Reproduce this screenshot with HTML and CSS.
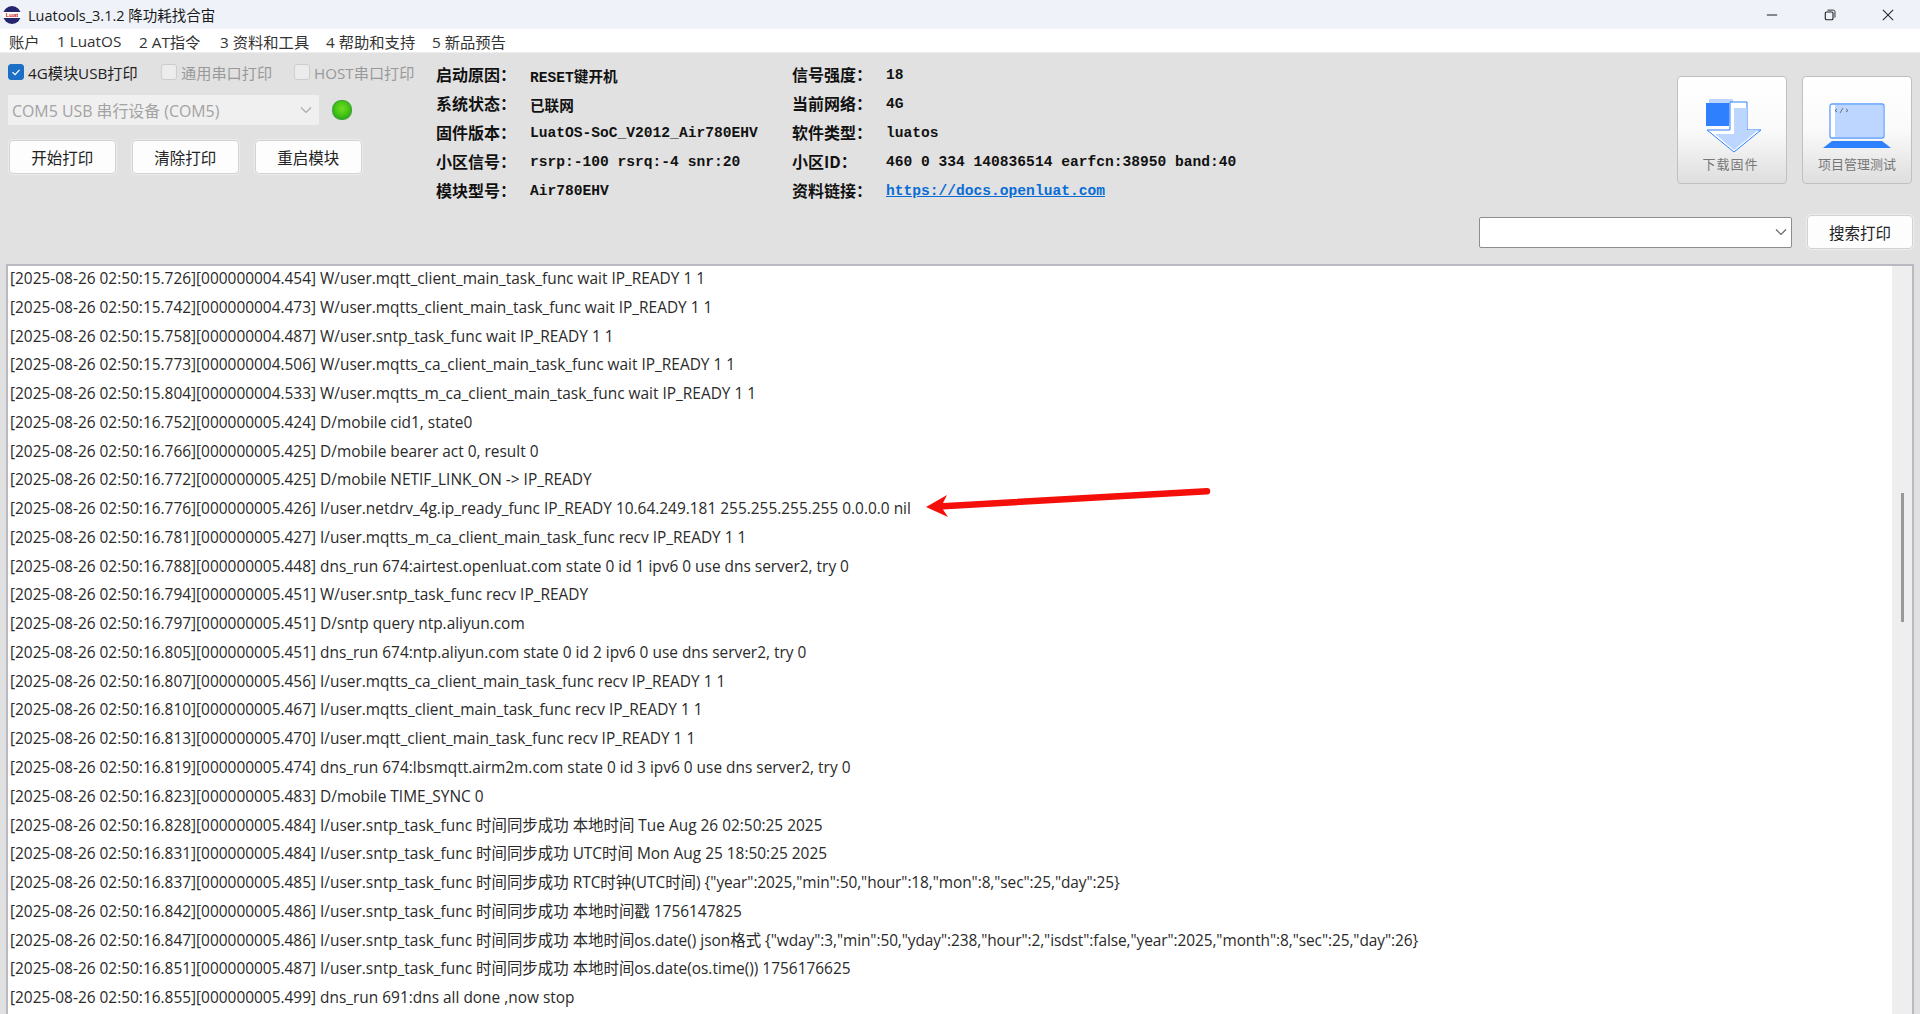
FILE: index.html
```html
<!DOCTYPE html>
<html lang="zh-CN">
<head>
<meta charset="utf-8">
<title>Luatools</title>
<link rel="stylesheet" href="styles.css">
</head>
<body>
<div class="app">
  <header class="titlebar">
    <span class="logo"><span class="logo-text">Luat</span></span>
    <span class="title">Luatools_3.1.2 降功耗找合宙</span>
    <span class="winctl">
      <svg class="wicon" viewBox="0 0 14 14"><path d="M1 7H13" stroke="#222" stroke-width="1.2" fill="none"/></svg>
      <svg class="wicon" viewBox="0 0 14 14"><rect x="1.5" y="3.5" width="9" height="9" rx="1.5" stroke="#222" stroke-width="1.3" fill="none"/><path d="M4 1.3H11A2 2 0 0 1 12.8 3V10" stroke="#222" stroke-width="1.1" fill="none"/></svg>
      <svg class="wicon" viewBox="0 0 14 14"><path d="M1 1L13 13M13 1L1 13" stroke="#222" stroke-width="1.2" fill="none"/></svg>
    </span>
  </header>
  <nav class="menubar">
    <span class="m1">账户</span><span class="m2">1 LuatOS</span><span class="m3">2 AT指令</span><span class="m4">3 资料和工具</span><span class="m5">4 帮助和支持</span><span>5 新品预告</span>
  </nav>
  <section class="panel">
    <div class="left">
      <div class="checks">
        <label class="check on"><span class="box"><svg viewBox="0 0 16 16"><path d="M4 8.3L7 11L12 5.5" stroke="#fff" stroke-width="1.4" fill="none"/></svg></span>4G模块USB打印</label>
        <label class="check off c2"><span class="box"></span>通用串口打印</label>
        <label class="check off"><span class="box"></span>HOST串口打印</label>
      </div>
      <div class="portrow">
        <div class="combo disabled"><span>COM5 USB 串行设备 (COM5)</span><svg class="chev" viewBox="0 0 12 8"><path d="M1 1.5L6 6.5L11 1.5" stroke="#aaa" stroke-width="1.2" fill="none"/></svg></div>
        <span class="led"></span>
      </div>
      <div class="btns">
        <button class="btn">开始打印</button>
        <button class="btn">清除打印</button>
        <button class="btn">重启模块</button>
      </div>
    </div>
    <div class="info">
      <span class="k">启动原因：</span><span class="v">RESET键开机</span><span class="k">信号强度：</span><span class="v">18</span>
      <span class="k">系统状态：</span><span class="v">已联网</span><span class="k">当前网络：</span><span class="v">4G</span>
      <span class="k">固件版本：</span><span class="v">LuatOS-SoC_V2012_Air780EHV</span><span class="k">软件类型：</span><span class="v">luatos</span>
      <span class="k">小区信号：</span><span class="v">rsrp:-100 rsrq:-4 snr:20</span><span class="k">小区ID：</span><span class="v">460 0 334 140836514 earfcn:38950 band:40</span>
      <span class="k">模块型号：</span><span class="v">Air780EHV</span><span class="k">资料链接：</span><a class="v link" href="#">https://docs.openluat.com</a>
    </div>
    <div class="right">
      <div class="bigs">
        <button class="big">
          <svg class="bigicon" viewBox="0 0 56 54"><rect x="3" y="0" width="24" height="24" fill="#bcd6ff"/><path d="M24 3H41V31H55L28 53L1 31H24Z" fill="#fff" stroke="#2f80ff" stroke-width="1"/><path d="M28 9H41V31H52L28 51L9 35H28Z" fill="#bcd6ff"/><rect x="0" y="4" width="23" height="23" fill="#2f80ff"/></svg>
          <span class="spaced">下载固件</span>
        </button>
        <button class="big">
          <svg class="bigicon wide" viewBox="0 0 70 46"><rect x="8" y="1" width="54" height="34" rx="2" fill="#fff" stroke="#5c9dff" stroke-width="1.3"/><rect x="13" y="2" width="48" height="32" fill="#bcd6ff"/><path d="M10 38H60L69 45H1Z" fill="#2f80ff"/><path d="M15 6L13 7.5L15 9M24 6L26 7.5L24 9M18 10L21 5" stroke="#555" stroke-width=".8" fill="none"/></svg>
          <span>项目管理测试</span>
        </button>
      </div>
      <div class="searchrow">
        <div class="combo search"><svg class="chev" viewBox="0 0 12 8"><path d="M1 1.5L6 6.5L11 1.5" stroke="#666" stroke-width="1.2" fill="none"/></svg></div>
        <button class="btn sbtn">搜索打印</button>
      </div>
    </div>
  </section>
  <section class="logbox">
    <div class="log">
      <div>[2025-08-26 02:50:15.726][000000004.454] W/user.mqtt_client_main_task_func wait IP_READY 1 1</div>
      <div>[2025-08-26 02:50:15.742][000000004.473] W/user.mqtts_client_main_task_func wait IP_READY 1 1</div>
      <div>[2025-08-26 02:50:15.758][000000004.487] W/user.sntp_task_func wait IP_READY 1 1</div>
      <div>[2025-08-26 02:50:15.773][000000004.506] W/user.mqtts_ca_client_main_task_func wait IP_READY 1 1</div>
      <div>[2025-08-26 02:50:15.804][000000004.533] W/user.mqtts_m_ca_client_main_task_func wait IP_READY 1 1</div>
      <div>[2025-08-26 02:50:16.752][000000005.424] D/mobile cid1, state0</div>
      <div>[2025-08-26 02:50:16.766][000000005.425] D/mobile bearer act 0, result 0</div>
      <div>[2025-08-26 02:50:16.772][000000005.425] D/mobile NETIF_LINK_ON -&gt; IP_READY</div>
      <div>[2025-08-26 02:50:16.776][000000005.426] I/user.netdrv_4g.ip_ready_func IP_READY 10.64.249.181 255.255.255.255 0.0.0.0 nil</div>
      <div>[2025-08-26 02:50:16.781][000000005.427] I/user.mqtts_m_ca_client_main_task_func recv IP_READY 1 1</div>
      <div>[2025-08-26 02:50:16.788][000000005.448] dns_run 674:airtest.openluat.com state 0 id 1 ipv6 0 use dns server2, try 0</div>
      <div>[2025-08-26 02:50:16.794][000000005.451] W/user.sntp_task_func recv IP_READY</div>
      <div>[2025-08-26 02:50:16.797][000000005.451] D/sntp query ntp.aliyun.com</div>
      <div>[2025-08-26 02:50:16.805][000000005.451] dns_run 674:ntp.aliyun.com state 0 id 2 ipv6 0 use dns server2, try 0</div>
      <div>[2025-08-26 02:50:16.807][000000005.456] I/user.mqtts_ca_client_main_task_func recv IP_READY 1 1</div>
      <div>[2025-08-26 02:50:16.810][000000005.467] I/user.mqtts_client_main_task_func recv IP_READY 1 1</div>
      <div>[2025-08-26 02:50:16.813][000000005.470] I/user.mqtt_client_main_task_func recv IP_READY 1 1</div>
      <div>[2025-08-26 02:50:16.819][000000005.474] dns_run 674:lbsmqtt.airm2m.com state 0 id 3 ipv6 0 use dns server2, try 0</div>
      <div>[2025-08-26 02:50:16.823][000000005.483] D/mobile TIME_SYNC 0</div>
      <div>[2025-08-26 02:50:16.828][000000005.484] I/user.sntp_task_func 时间同步成功 本地时间 Tue Aug 26 02:50:25 2025</div>
      <div>[2025-08-26 02:50:16.831][000000005.484] I/user.sntp_task_func 时间同步成功 UTC时间 Mon Aug 25 18:50:25 2025</div>
      <div>[2025-08-26 02:50:16.837][000000005.485] I/user.sntp_task_func 时间同步成功 RTC时钟(UTC时间) <span class="json">{"year":2025,"min":50,"hour":18,"mon":8,"sec":25,"day":25}</span></div>
      <div>[2025-08-26 02:50:16.842][000000005.486] I/user.sntp_task_func 时间同步成功 本地时间戳 1756147825</div>
      <div>[2025-08-26 02:50:16.847][000000005.486] I/user.sntp_task_func 时间同步成功 本地时间os.date() json格式 <span class="json">{"wday":3,"min":50,"yday":238,"hour":2,"isdst":false,"year":2025,"month":8,"sec":25,"day":26}</span></div>
      <div>[2025-08-26 02:50:16.851][000000005.487] I/user.sntp_task_func 时间同步成功 本地时间os.date(os.time()) 1756176625</div>
      <div>[2025-08-26 02:50:16.855][000000005.499] dns_run 691:dns all done ,now stop</div>
    </div>
    <div class="scrollbar"><span class="thumb"></span></div>
  </section>
  <svg class="arrow" viewBox="0 0 300 40"><path d="M3 21L24 9L20 17L284 2A3.2 3.2 0 0 1 284 8.5L20 23.5L25 31Z" fill="#f40f0a"/></svg>
</div>
</body>
</html>
```
FILE: styles.css
```css
* { box-sizing: border-box; }
html, body { margin: 0; height: 100%; overflow: hidden; }
body { font-family: "Open Sans", "Noto Sans CJK SC", sans-serif; color: #222; background: #e1e1e1; }
.app { position: relative; height: 1014px; display: flex; flex-direction: column; }

.titlebar { height: 29px; background: #eff3f9; display: flex; align-items: center; padding-left: 3px; flex: none; }
.logo { width: 18px; height: 18px; border-radius: 50%; background: #25256e; display: flex; align-items: center; justify-content: center; }
.logo-text { background: #fff; color: #c22; font: bold 6px/6px "Liberation Sans", sans-serif; width: 100%; text-align: center; }
.title { margin-left: 7px; font-size: 14.5px; color: #1a1a1a; }
.winctl { margin-left: auto; display: flex; gap: 46px; padding-right: 26px; }
.wicon { width: 12px; height: 12px; display: block; }

.menubar { height: 23px; background: #fff; display: flex; align-items: center; padding-left: 9px; font-size: 15.3px; flex: none; white-space: pre; color: #333; }
.menubar span { display: block; }
.m1 { width: 48px; }
.m2 { width: 82px; }
.m3 { width: 81px; }
.m4 { width: 106px; }
.m5 { width: 106px; }

.panel { height: 212px; flex: none; display: flex; border-top: 1px solid #eee; }
.left { width: 436px; flex: none; padding: 8px 0 0 8px; }
.checks { display: flex; align-items: center; height: 22px; font-size: 15.2px; }
.check { display: flex; align-items: center; white-space: nowrap; }
.check.on { color: #222; width: 153px; }
.check.off { color: #999; }
.check.c2 { width: 133px; }
.box { width: 16px; height: 16px; border-radius: 3px; margin-right: 4px; background: #ececec; border: 1px solid #cdcdcd; display: block; }
.on .box { background: #1b6fc4; border-color: #1b6fc4; }
.box svg { display: block; width: 14px; height: 14px; }

.portrow { display: flex; align-items: center; margin-top: 12px; }
.combo { display: flex; align-items: center; justify-content: space-between; }
.combo.disabled { width: 311px; height: 30px; background: #f0f0f0; color: #a3a3a3; font-size: 15.9px; padding: 0 3px 0 4px; }
.chev { width: 12px; height: 8px; margin-right: 4px; flex: none; }
.led { width: 20px; height: 20px; border-radius: 45%; margin-left: 13px; background: radial-gradient(circle at 50% 42%, #6fdc20 0, #45c415 50%, #1f8f1a 100%); border: 1px solid #3fa23a; }

.btns { display: flex; gap: 16.5px; margin-top: 15px; margin-left: 1px; }
.btn { width: 106.5px; height: 34px; background: #fdfdfd; border: 1px solid #d2d2d2; border-radius: 4px; font: 15.5px "Noto Sans CJK SC", sans-serif; color: #222; padding: 0; box-shadow: 0 0 0 1px #ececec; }

.info { width: 985px; flex: none; padding-top: 7px; display: grid; grid-template-columns: 94px 262px 94px 1fr; grid-auto-rows: 28.8px; align-items: center; white-space: nowrap; color: #111; }
.k { font: 700 16px "Noto Sans CJK SC", sans-serif; }
.v { font: 700 14.6px "Liberation Mono", "Noto Sans CJK SC", monospace; padding-top: 2px; }
.link { color: #0a6dd6; text-decoration: underline; }

.right { flex: 1; min-width: 0; position: relative; }
.bigs { display: flex; gap: 15px; padding: 23px 0 0 256px; }
.big { width: 110px; height: 108px; border: 1px solid #c0c0c0; border-radius: 4px; background: linear-gradient(#fff 0, #fafafa 50%, #dedede 100%); display: flex; flex-direction: column; align-items: center; padding: 22px 0 0; font: 13px "Noto Sans CJK SC", sans-serif; color: #777; }
.big span { margin-top: auto; margin-bottom: 10px; }
.big .spaced { letter-spacing: 1px; margin-right: 3px; }
.bigicon { width: 56px; height: 54px; display: block; margin-left: 4px; }
.bigicon.wide { width: 70px; height: 46px; margin: 4px 0 0; }
.searchrow { display: flex; align-items: center; gap: 15px; margin-top: 31px; padding-left: 58px; }
.combo.search { width: 313px; height: 31px; background: #fff; border: 1px solid #8d8d8d; border-radius: 2px; justify-content: flex-end; }
.sbtn { width: 106px; }

.logbox { flex: 1; min-height: 0; margin: 0 6px; background: #fff; border: 1px solid #b9b9c2; border-width: 2px 2px 0 2px; display: flex; overflow: hidden; }
.log { flex: 1; min-width: 0; padding: 0 0 0 2px; margin-top: -1px; font: 15.43px/28.77px "Open Sans", "Noto Sans CJK SC", sans-serif; color: #2a2a2a; white-space: nowrap; }
.json { letter-spacing: -.08px; }
.scrollbar { width: 20px; flex: none; background: #eee; position: relative; }
.thumb { position: absolute; left: 9px; top: 227px; width: 3px; height: 129px; background: #999; }

.arrow { position: absolute; left: 923px; top: 486px; width: 300px; height: 40px; }
```
